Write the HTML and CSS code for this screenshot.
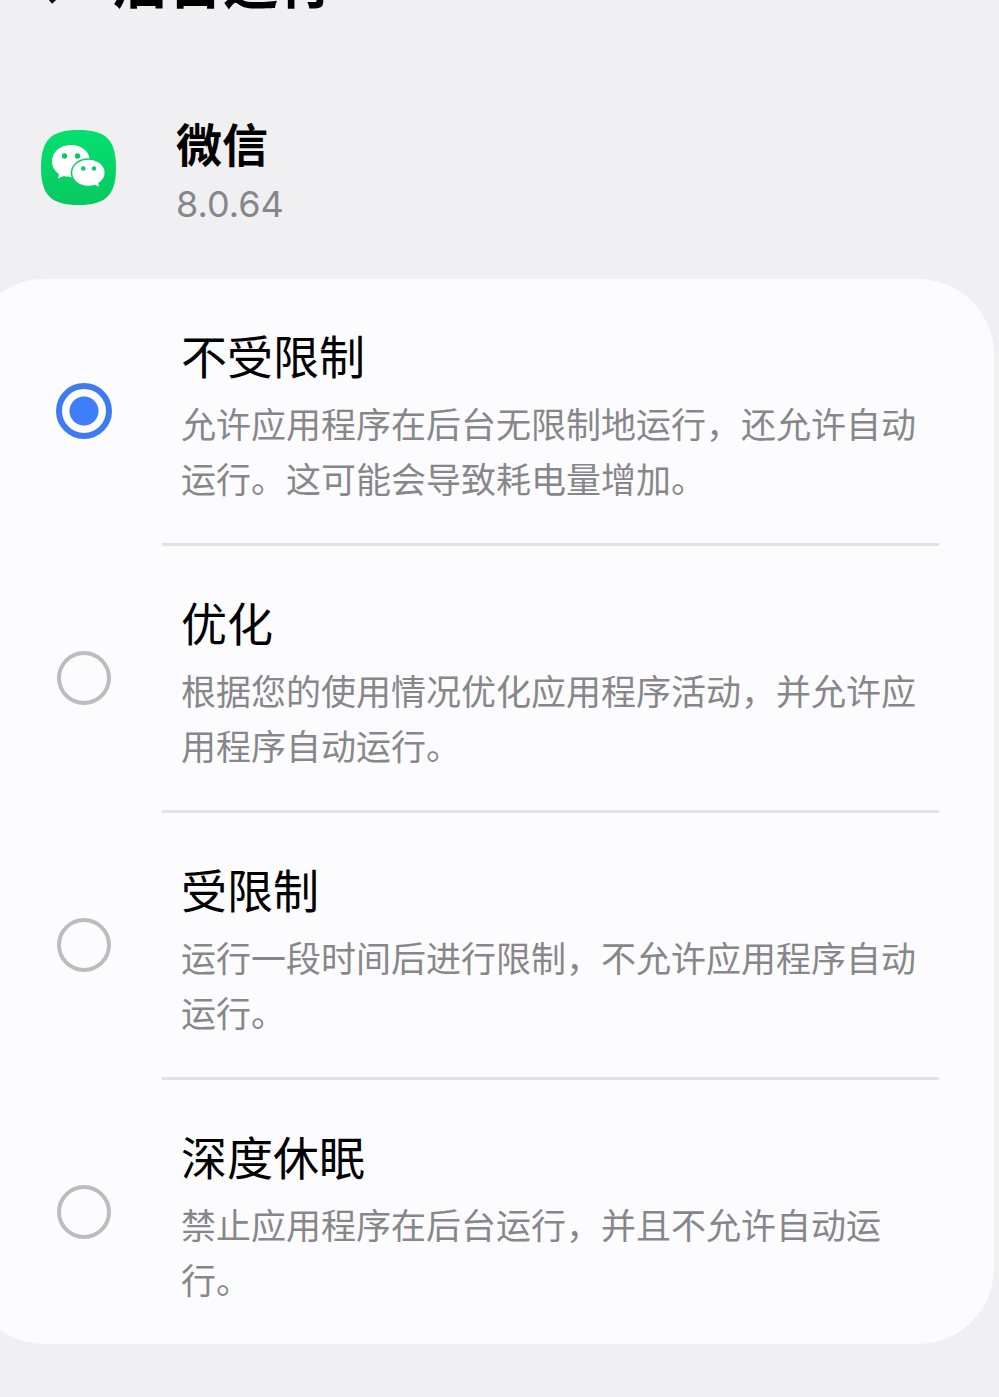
FILE: index.html
```
<!DOCTYPE html>
<html lang="zh-CN">
<head>
  <meta charset="UTF-8">
  <meta name="viewport" content="width=device-width, initial-scale=1.0">
  <title>后台运行</title>
  <link rel="stylesheet" href="styles.css">
</head>
<body>

  <header class="topbar">
    <button type="button" class="back" aria-label="返回">
      <svg width="24" height="44" viewBox="0 0 24 44" fill="none" stroke="#000" stroke-width="5">
        <path d="M21 3 L4 22 L21 41"/>
      </svg>
    </button>
    <h1>后台运行</h1>
  </header>

  <section class="app">
    <svg class="app-icon" viewBox="0 0 75 75">
      <defs>
        <linearGradient id="green" x1="0" y1="0" x2="0" y2="1">
          <stop offset="0" stop-color="#04e070"/>
          <stop offset="1" stop-color="#07c95f"/>
        </linearGradient>
      </defs>
      <path fill="url(#green)" d="M37.500 0 C65 0 75 10 75 37.500 C75 65 65 75 37.500 75 C10 75 0 65 0 37.500 C0 10 10 0 37.500 0Z"/>
      <!-- big bubble -->
      <path fill="#fff" d="M30 15 C19 15 11 22 11 31.500 C11 36.500 13.500 41 18 44 L17 48.500 L23 46 C25 46.800 27.500 47.200 30 47.200 C41 47.200 49 40.500 49 31.500 C49 22 41 15 30 15Z"/>
      <!-- small bubble -->
      <path fill="#fff" stroke="#06d366" stroke-width="1.500" d="M47.500 29 C38 29 30.500 35 30.500 42.800 C30.500 50.500 38 56.500 47.500 56.500 C49.800 56.500 52 56.200 54 55.500 L59 58.200 L58 53.500 C61.800 51 64.300 47.200 64.300 42.800 C64.300 35 57 29 47.500 29Z"/>
      <g fill="#0cc566">
        <circle cx="23.500" cy="26" r="2.700"/>
        <circle cx="36.500" cy="26" r="2.700"/>
        <circle cx="42.300" cy="38.500" r="2.200"/>
        <circle cx="53" cy="38.500" r="2.200"/>
      </g>
    </svg>
    <div class="app-info">
      <h2>微信</h2>
      <p>8.0.64</p>
    </div>
  </section>

  <form class="card">
    <label class="option">
      <input type="radio" name="mode" value="unrestricted" checked>
      <span class="option-text">
        <span class="title">不受限制</span>
        <span class="desc">允许应用程序在后台无限制地运行，还允许自动运行。这可能会导致耗电量增加。</span>
      </span>
    </label>
    <hr>
    <label class="option">
      <input type="radio" name="mode" value="optimized">
      <span class="option-text">
        <span class="title">优化</span>
        <span class="desc">根据您的使用情况优化应用程序活动，并允许应用程序自动运行。</span>
      </span>
    </label>
    <hr>
    <label class="option">
      <input type="radio" name="mode" value="restricted">
      <span class="option-text">
        <span class="title">受限制</span>
        <span class="desc">运行一段时间后进行限制，不允许应用程序自动运行。</span>
      </span>
    </label>
    <hr>
    <label class="option">
      <input type="radio" name="mode" value="deep-sleep">
      <span class="option-text">
        <span class="title">深度休眠</span>
        <span class="desc">禁止应用程序在后台运行，并且不允许自动运行。</span>
      </span>
    </label>
  </form>

</body>
</html>
```
FILE: styles.css
```
* {
  margin: 0;
  padding: 0;
  box-sizing: border-box;
}

body {
  background-color: #f0f0f2;
  color: #000;
  font-family: "Noto Sans CJK SC", sans-serif;
  overflow-x: hidden;
}

/* title bar, scrolled almost out of view */
.topbar {
  display: flex;
  align-items: flex-end;
  height: 15px;
  padding-left: 33px;
  overflow: hidden;
}

.back {
  display: flex;
  width: 80px;
  padding-bottom: 10px;
  background: none;
  border: none;
  cursor: pointer;
}

.topbar h1 {
  font-size: 55px;
  line-height: 72px;
  font-weight: 700;
}

.app {
  display: flex;
  align-items: flex-start;
  gap: 60px;
  padding: 97px 41px 43px;
}

.app-icon {
  width: 75px;
  height: 75px;
  margin-top: 18px;
}

.app-info h2 {
  font-size: 46px;
  line-height: 60px;
  font-weight: 700;
}

.app-info p {
  font-family: Inter, sans-serif;
  font-size: 36px;
  line-height: 64px;
  color: #87878a;
}

/* the card runs past the left edge of the screen */
.card {
  margin: 0 5px 53px -31px;
  padding-left: 31px;
  background-color: #fcfcfe;
  border-radius: 76px;
}

.card hr {
  height: 3px;
  margin: 0 55px 0 162px;
  border: none;
  background-color: #e2e2e4;
}

.option {
  display: flex;
  align-items: center;
  padding-right: 55px;
  cursor: pointer;
}

.option input {
  appearance: none;
  flex: none;
  width: 54px;
  height: 54px;
  margin: 0 51px 0 57px;
  border: 4px solid #bcbcbe;
  border-radius: 50%;
}

.option input:checked {
  width: 56px;
  height: 56px;
  margin: 0 50px 0 56px;
  border: 6px solid #3e7bf2;
  background: radial-gradient(circle, #3e7dfb 14px, transparent 15px);
}

.option-text {
  flex: 1;
  padding: 42px 0 38px 19px;
}

.title {
  display: block;
  margin-bottom: 8px;
  font-size: 46px;
  line-height: 66px;
}

.desc {
  display: block;
  font-size: 35px;
  line-height: 55px;
  color: #87878a;
}
```
